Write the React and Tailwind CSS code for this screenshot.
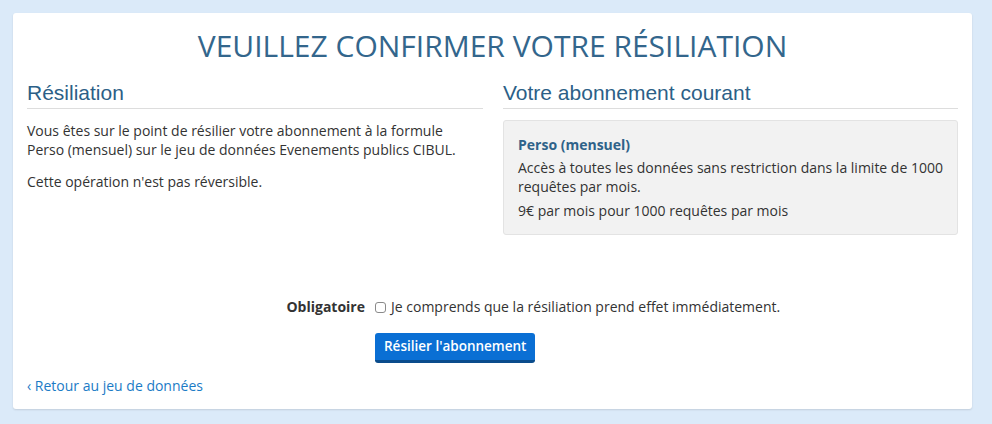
export default function App() {
  const os = { fontFamily: '"Open Sans", "Noto Sans", sans-serif' };
  return (
    <div className="w-[992px] h-[424px] bg-[#dbeaf9] pt-[13px] pl-[13px]" style={os}>
      <div className="w-[959px] h-[396px] bg-white rounded-[3px] shadow-[0_1px_2px_rgba(0,0,0,0.12)] px-[14px] pt-[11px] flex flex-col">
        <h1 className="text-[30px] leading-[44px] text-[#33668c] text-center font-normal">
          VEUILLEZ CONFIRMER VOTRE RÉSILIATION
        </h1>
        <div className="mt-[13px] grid grid-cols-[456px_455px] gap-x-[20px]">
          <div>
            <h3 className="text-[21px] leading-[24px] text-[#2c5f87] pb-[3px] border-b border-[#dddddd]" style={{ fontFamily: '"Liberation Sans", Arial, sans-serif' }}>
              Résiliation
            </h3>
            <div className="mt-[12px] text-[14px] leading-[19px] text-[#333333]">
              <p>
                Vous êtes sur le point de résilier votre abonnement à la formule Perso (mensuel) sur le jeu de données Evenements publics CIBUL.
              </p>
              <p className="mt-[13px]">Cette opération n'est pas réversible.</p>
            </div>
          </div>
          <div>
            <h3 className="text-[21px] leading-[24px] text-[#2c5f87] pb-[3px] border-b border-[#dddddd]" style={{ fontFamily: '"Liberation Sans", Arial, sans-serif' }}>
              Votre abonnement courant
            </h3>
            <div className="mt-[11px] bg-[#f2f2f2] border border-[#e3e3e3] rounded-[3px] px-[14px] pt-[14px] pb-[14px] text-[14px] leading-[19px] text-[#333333]">
              <div className="font-bold text-[#2f6289]">Perso (mensuel)</div>
              <p className="mt-[4px]">
                Accès à toutes les données sans restriction dans la limite de 1000 requêtes par mois.
              </p>
              <p className="mt-[5px]">9€ par mois pour 1000 requêtes par mois</p>
            </div>
          </div>
        </div>
        <div className="mt-[62px] flex items-center text-[14px] leading-[19px] text-[#333333]">
          <div className="w-[348px] pr-[10px] text-right font-bold">Obligatoire</div>
          <label className="flex items-center">
            <input
              type="checkbox"
              className="appearance-none w-[11px] h-[11px] border border-[#8a8a8a] rounded-[3px] bg-white mr-[5px] mt-[1px]"
            />
            <span>Je comprends que la résiliation prend effet immédiatement.</span>
          </label>
        </div>
        <div className="mt-[17px] pl-[348px]">
          <button className="h-[30px] px-[9px] bg-[#0a6fd4] border-b-[3px] border-[#0a4c8c] rounded-[3px] text-white text-[13.5px] font-semibold leading-[19px]">
            Résilier l'abonnement
          </button>
        </div>
        <div className="mt-[13px] text-[14px] leading-[19px]">
          <a className="text-[#1b7bc6]" href="#">‹ Retour au jeu de données</a>
        </div>
      </div>
    </div>
  );
}
